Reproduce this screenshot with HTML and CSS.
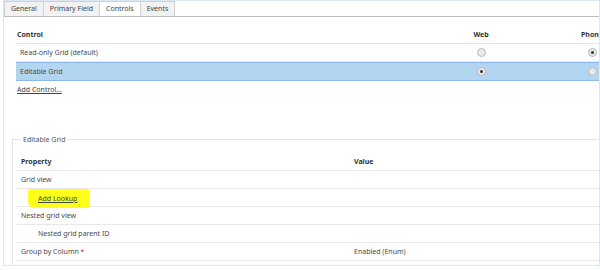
FILE: index.html
```html
<!DOCTYPE html>
<html>
<head>
    <title>Controls</title>
    <link rel="stylesheet" href="styles.css">
</head>
<body>
    <div class="page">
        <div class="tabs">
            <div class="tab">General</div>
            <div class="tab">Primary Field</div>
            <div class="tab active">Controls</div>
            <div class="tab">Events</div>
        </div>

        <div class="controls">
            <div class="ctl-row head">
                <div class="cell">Control</div>
                <div class="cell mid">Web</div>
                <div class="cell mid">Phone</div>
            </div>
            <div class="ctl-row">
                <div class="cell">Read-only Grid (default)</div>
                <div class="cell mid"><span class="radio"></span></div>
                <div class="cell mid"><span class="radio on"></span></div>
            </div>
            <div class="ctl-row selected">
                <div class="cell">Editable Grid</div>
                <div class="cell mid"><span class="radio on"></span></div>
                <div class="cell mid"><span class="radio"></span></div>
            </div>
            <a class="link add-control" href="#">Add Control...</a>
        </div>

        <fieldset class="props">
            <legend>Editable Grid</legend>
            <div class="prop-row head">
                <div class="cell">Property</div>
                <div class="cell">Value</div>
            </div>
            <div class="prop-row">
                <div class="cell">Grid view</div>
                <div class="cell"></div>
            </div>
            <div class="prop-row">
                <div class="cell indent"><span class="marker"><a class="link" href="#">Add Lookup</a></span></div>
                <div class="cell"></div>
            </div>
            <div class="prop-row">
                <div class="cell">Nested grid view</div>
                <div class="cell"></div>
            </div>
            <div class="prop-row">
                <div class="cell indent">Nested grid parent ID</div>
                <div class="cell"></div>
            </div>
            <div class="prop-row">
                <div class="cell">Group by Column <span class="req">*</span></div>
                <div class="cell">Enabled (Enum)</div>
            </div>
        </fieldset>
    </div>
</body>
</html>
```

FILE: styles.css
```css
body {
    margin: 0;
    background: #fff;
    overflow: hidden;
    font-family: "Noto Sans", "Open Sans", sans-serif;
    font-size: 7px;
    color: #4a4a4a;
}

.page {
    margin-left: 3px;
    width: 595px;
    height: 264px;
    overflow: hidden;
    border: 1px solid #dbe7f4;
}

/* tabs */
.tabs {
    display: flex;
    height: 15px;
    border-bottom: 1px solid #bdbdbd;
}

.tab {
    height: 14px;
    line-height: 14px;
    padding: 0 6px;
    background: #f2f2f2;
    border: 1px solid #d0d0d0;
    border-bottom: none;
    margin-right: -1px;
    color: #444;
}

.tab.active {
    background: #fff;
}

/* controls table */
.controls {
    padding: 9px 0 0 12px;
}

.ctl-row {
    display: grid;
    grid-template-columns: 415px 100px 122px;
    height: 17px;
    align-items: center;
    border-bottom: 1px solid #ebebeb;
}

.ctl-row.head {
    font-weight: bold;
    color: #333;
    border-bottom-color: #e4e4e4;
}

.ctl-row.head .cell:first-child {
    padding-left: 1px;
}

.ctl-row.selected {
    background: #b2d6f0;
    border-top: 1px solid #8fb7eb;
    border-bottom: 1px solid #8fb7eb;
}

.cell {
    padding-left: 4px;
    white-space: nowrap;
}

.cell.mid {
    padding-left: 0;
    text-align: center;
}

.radio {
    display: inline-block;
    width: 7px;
    height: 7px;
    border-radius: 50%;
    border: 1px solid #b8b8b8;
    background: #e8e8e8;
    vertical-align: middle;
    position: relative;
}

.radio.on::after {
    content: "";
    position: absolute;
    left: 2px;
    top: 2px;
    width: 3px;
    height: 3px;
    border-radius: 50%;
    background: #333;
}

.link {
    color: #444;
    text-decoration: underline;
}

.add-control {
    display: inline-block;
    margin: 4px 0 0 1px;
}

/* property fieldset */
.props {
    margin: 41px 0 0 8px;
    padding: 9px 0 0 4px;
    border: 1px solid #e4e4e4;
    border-right: none;
    height: 200px;
}

.props legend {
    padding: 0 2px;
    margin-left: 4px;
    color: #555;
}

.prop-row {
    display: grid;
    grid-template-columns: 333px 1fr;
    height: 17px;
    align-items: center;
    border-bottom: 1px solid #e8e8e8;
}

.prop-row.head {
    font-weight: bold;
    color: #333;
}

.cell.indent {
    padding-left: 21px;
}

.marker {
    display: inline-block;
    margin-left: -10px;
    padding: 5px 13px 5px 10px;
    background: #ffff1a;
    border-radius: 2px 4px 3px 6px;
}

.req {
    color: #e02020;
}
```
